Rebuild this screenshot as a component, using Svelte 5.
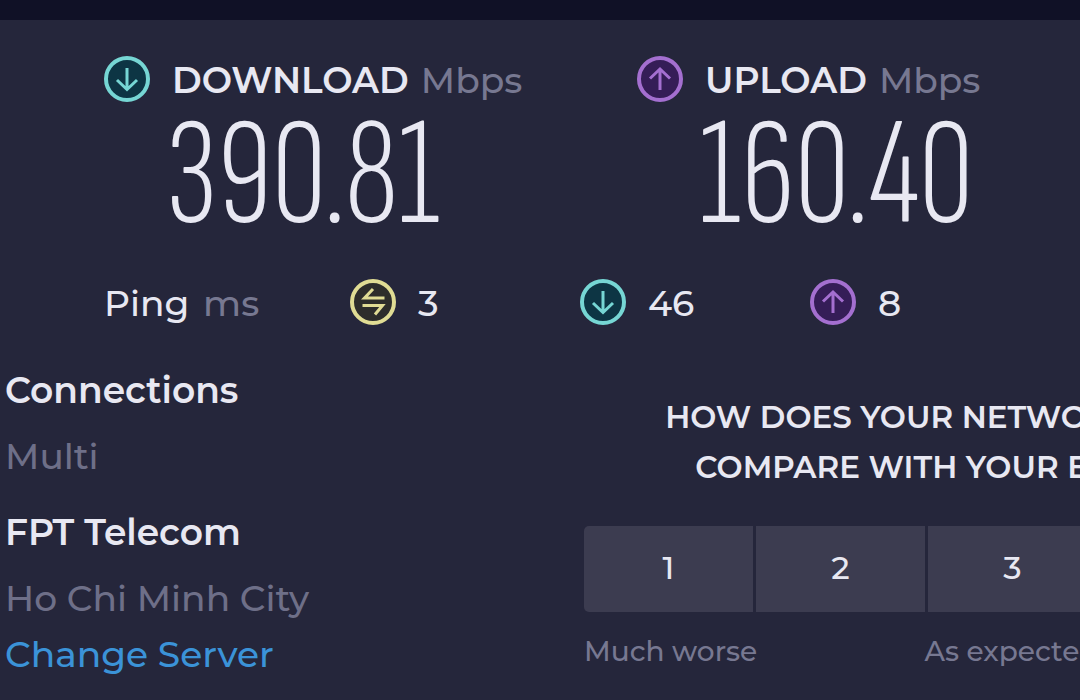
<script lang="ts">
  type IconName = 'down' | 'up' | 'idle';

  const speeds: { icon: IconName; label: string; value: string }[] = [
    { icon: 'down', label: 'DOWNLOAD', value: '390.81' },
    { icon: 'up', label: 'UPLOAD', value: '160.40' }
  ];

  const pings: { icon: IconName; label: string; value: number }[] = [
    { icon: 'idle', label: 'Idle latency', value: 3 },
    { icon: 'down', label: 'Download latency', value: 46 },
    { icon: 'up', label: 'Upload latency', value: 8 }
  ];

  const scores = [1, 2, 3, 4, 5];

  let picked = $state(0);
</script>

{#snippet icon(name: IconName)}
  <svg class="icon {name}" viewBox="0 0 46 46" aria-hidden="true">
    <circle cx="23" cy="23" r="21" />
    {#if name === 'down'}
      <path d="M23 12v21M13 24l10 9.500 10-9.500" />
    {:else if name === 'up'}
      <path d="M23 34V13M13 22.500L23 13l10 9.500" />
    {:else}
      <path d="M34.500 19H14.500L23 10M12.500 26.500H32.500L25 35.500" />
    {/if}
  </svg>
{/snippet}

<div class="page">
  <header class="topbar"></header>

  <main class="result">
    <section class="speeds">
      {#each speeds as speed}
        <div class="speed">
          {@render icon(speed.icon)}
          <h2 class="speed-title">{speed.label} <span class="unit">Mbps</span></h2>
          <p class="speed-value">{speed.value}</p>
        </div>
      {/each}
    </section>

    <section class="pings">
      <h2 class="ping-title">Ping <span class="unit">ms</span></h2>
      {#each pings as ping}
        <div class="ping" title={ping.label}>
          {@render icon(ping.icon)}
          <span>{ping.value}</span>
        </div>
      {/each}
    </section>

    <div class="details">
      <section class="server">
        <h3>Connections</h3>
        <p>Multi</p>
        <h3>FPT Telecom</h3>
        <p>Ho Chi Minh City</p>
        <a href="#servers">Change Server</a>
      </section>

      <section class="survey">
        <h3 class="question">
          HOW DOES YOUR NETWORK AVAILABILITY<br />COMPARE WITH YOUR EXPECTATIONS?
        </h3>
        <div class="scores">
          {#each scores as score}
            <button
              type="button"
              class:picked={picked === score}
              onclick={() => (picked = score)}>{score}</button
            >
          {/each}
        </div>
        <div class="legend">
          <span>Much worse</span>
          <span>As expected</span>
          <span>Much better</span>
        </div>
      </section>
    </div>
  </main>
</div>

<style>
  :global(body) {
    background: #25263b;
    overflow: hidden;
  }

  .page {
    min-height: 100vh;
    overflow: hidden;
    color: #e8e8f2;
    background: #25263b;
    font-family: Montserrat, Inter, "Open Sans", sans-serif;
    font-size: 36px;
    font-weight: 500;
    line-height: 48px;
  }

  h2,
  h3,
  p {
    margin: 0;
    font-size: inherit;
    font-weight: inherit;
  }

  .topbar {
    height: 20px;
    background: #101126;
  }

  .icon {
    width: 46px;
    height: 46px;
    flex: none;
    fill: none;
    stroke: currentColor;
    stroke-width: 4;
  }

  .down {
    color: #76d6d4;
    fill: #0d3544;
  }

  .up {
    color: #a46fd0;
    fill: #351d57;
  }

  .idle {
    color: #e0dc94;
    fill: #2d2d2b;
  }

  .icon path {
    fill: none;
    stroke-width: 3;
  }

  .unit {
    color: #777891;
    font-weight: 500;
  }

  .speeds {
    display: grid;
    grid-template-columns: 1fr 1fr;
    padding: 36px 0 0 104px;
    column-gap: 90px;
  }

  .speed {
    display: grid;
    grid-template-columns: 46px 1fr;
    column-gap: 16px;
    white-space: nowrap;
  }

  .speed-title {
    padding-left: 6px;
    font-weight: 600;
  }

  .speed-title .unit {
    margin-left: 2px;
  }

  .speed-value {
    grid-column: 2;
    font-family: "Sofia Sans Extra Condensed", "Roboto Condensed", Roboto, sans-serif;
    font-size: 154px;
    font-weight: 300;
    line-height: 144px;
  }

  .pings {
    display: grid;
    grid-template-columns: 246px 230px 230px 1fr;
    padding: 31px 0 0 104px;
  }

  .ping-title .unit {
    margin-left: 4px;
  }

  .ping {
    display: flex;
    gap: 22px;
  }

  .details {
    display: grid;
    grid-template-columns: 584px 1fr;
    padding-top: 39px;
  }

  .server {
    padding-left: 5px;
  }

  .server h3 {
    font-weight: 600;
  }

  .server p {
    margin: 18px 0 28px;
    color: #6e6f88;
  }

  .server p:last-of-type {
    margin-bottom: 8px;
  }

  .server a {
    color: #3b93d8;
    text-decoration: none;
  }

  .survey {
    width: max-content;
    padding-top: 26px;
  }

  .question {
    font-size: 31px;
    font-weight: 600;
    line-height: 50px;
    text-align: center;
    white-space: nowrap;
  }

  .scores {
    display: grid;
    grid-template-columns: repeat(5, 169px);
    gap: 3px;
    margin-top: 34px;
    overflow: hidden;
    border-radius: 5px;
  }

  .scores button {
    height: 86px;
    padding: 0 0 2px;
    border: 0;
    color: inherit;
    background: #3c3c50;
    font: inherit;
    font-size: 32px;
    cursor: pointer;
  }

  .scores button.picked {
    background: #56576f;
  }

  .legend {
    display: flex;
    justify-content: space-between;
    margin-top: 15px;
    color: #777891;
    font-size: 28px;
  }
</style>
